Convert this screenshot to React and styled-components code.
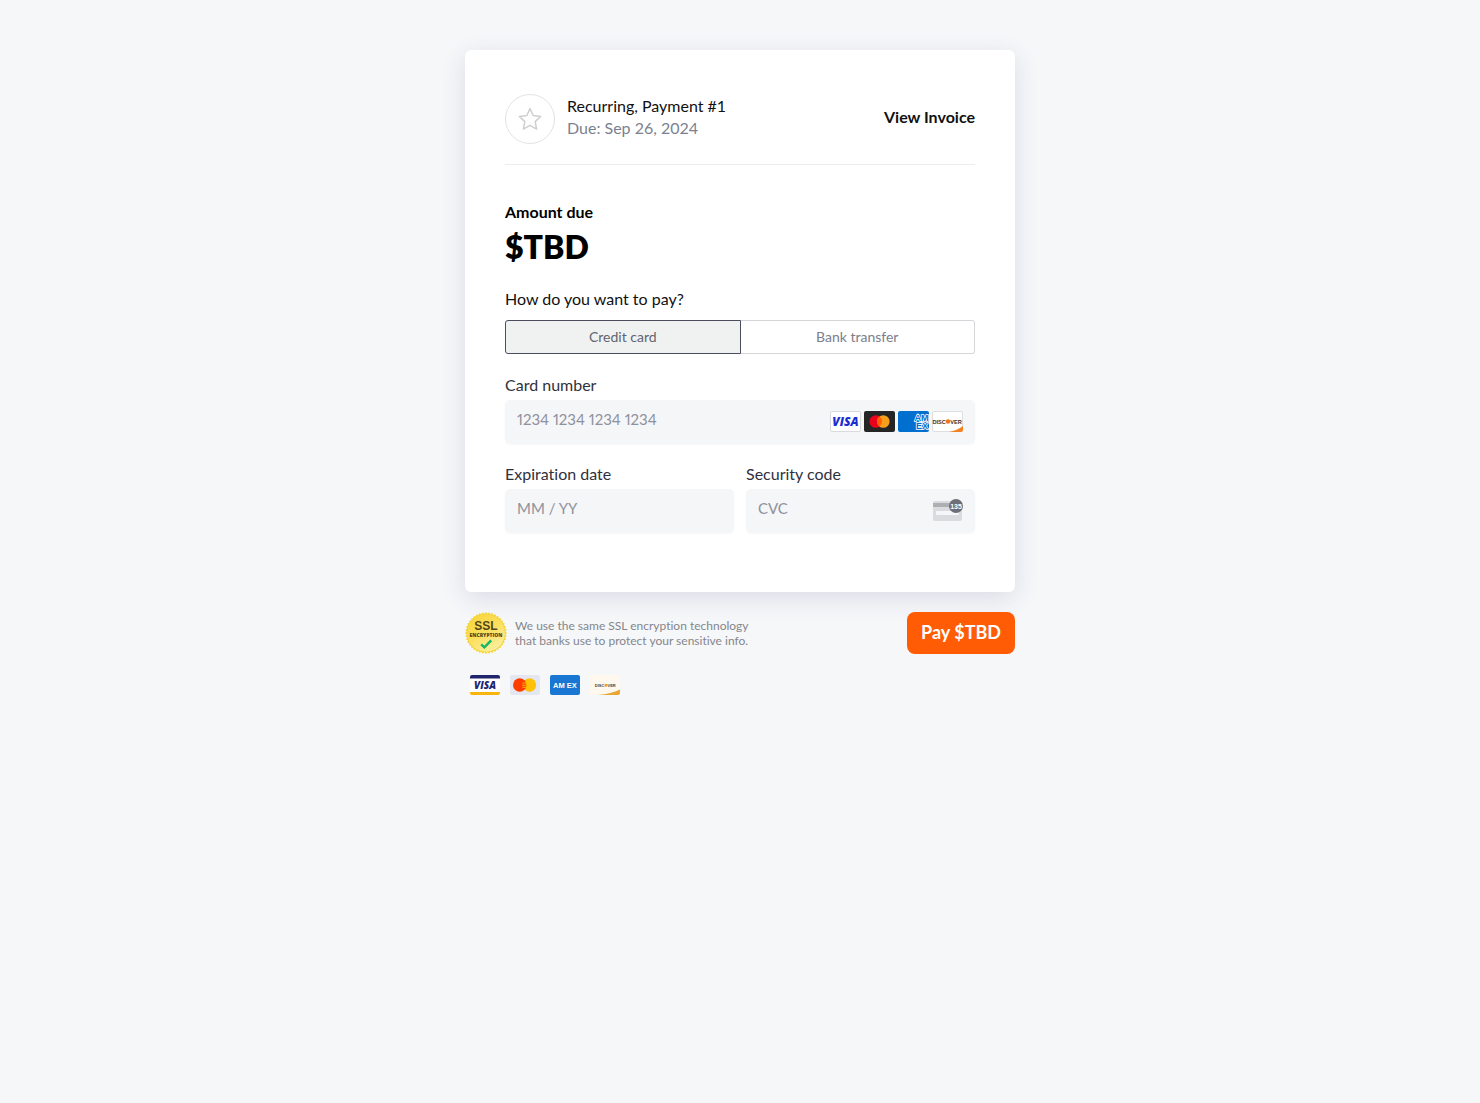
import React, { useState } from "react";
import styled, { createGlobalStyle } from "styled-components";

const App = () => {
  const [method, setMethod] = useState("card");

  return (
    <>
      <GlobalStyle />
      <Page>
        <Card>
          <Header>
            <Avatar>
              <StarIcon />
            </Avatar>
            <Heading>
              <Title>Recurring, Payment #1</Title>
              <DueDate>Due: Sep 26, 2024</DueDate>
            </Heading>
            <InvoiceLink href="#invoice">View Invoice</InvoiceLink>
          </Header>

          <AmountLabel>Amount due</AmountLabel>
          <Amount>$TBD</Amount>

          <Question id="method-label">How do you want to pay?</Question>
          <Toggle role="group" aria-labelledby="method-label">
            <ToggleButton
              type="button"
              $active={method === "card"}
              aria-pressed={method === "card"}
              onClick={() => setMethod("card")}
            >
              Credit card
            </ToggleButton>
            <ToggleButton
              type="button"
              $active={method === "bank"}
              aria-pressed={method === "bank"}
              onClick={() => setMethod("bank")}
            >
              Bank transfer
            </ToggleButton>
          </Toggle>

          <Fields>
            <Field $wide>
              <Label htmlFor="number">Card number</Label>
              <InputBox>
                <Input id="number" placeholder="1234 1234 1234 1234" />
                <Brands>
                  <VisaBadge />
                  <MastercardBadge />
                  <AmexBadge />
                  <DiscoverBadge />
                </Brands>
              </InputBox>
            </Field>
            <Field>
              <Label htmlFor="expiry">Expiration date</Label>
              <InputBox>
                <Input id="expiry" placeholder="MM / YY" />
              </InputBox>
            </Field>
            <Field>
              <Label htmlFor="cvc">Security code</Label>
              <InputBox>
                <Input id="cvc" placeholder="CVC" />
                <CvcIcon />
              </InputBox>
            </Field>
          </Fields>
        </Card>

        <Footer>
          <SslSeal />
          <SslText>
            We use the same SSL encryption technology
            <br />
            that banks use to protect your sensitive info.
          </SslText>
          <PayButton type="button">Pay $TBD</PayButton>
        </Footer>

        <Accepted>
          <VisaLogo />
          <MastercardLogo />
          <AmexLogo />
          <DiscoverLogo />
        </Accepted>
      </Page>
    </>
  );
};

export default App;

const StarIcon = () => (
  <svg width="24" height="24" viewBox="0 0 24 24" aria-hidden="true">
    <path
      d="M12 1.6l3.2 6.9 7.5.9-5.5 5.2 1.4 7.5-6.6-3.7-6.6 3.7 1.4-7.5L1.3 9.4l7.5-.9z"
      fill="none"
      stroke="#cfcfcf"
      strokeWidth="1.5"
      strokeLinejoin="round"
    />
  </svg>
);

const VisaBadge = () => (
  <svg width="31" height="21" viewBox="0 0 31 21" role="img" aria-label="Visa">
    <rect x=".5" y=".5" width="30" height="20" rx="1.5" fill="#fff" stroke="#d9d9de" />
    <LogoText x="15.5" y="15" fontSize="12" fill="#1a2ed0" $italic>
      VISA
    </LogoText>
  </svg>
);

const MastercardBadge = () => (
  <svg width="31" height="21" viewBox="0 0 31 21" role="img" aria-label="Mastercard">
    <rect width="31" height="21" rx="2" fill="#252525" />
    <circle cx="11.7" cy="10.5" r="6.3" fill="#eb001b" />
    <circle cx="19.3" cy="10.5" r="6.3" fill="#f79e1b" />
    <path d="M15.5 5.5a6.3 6.3 0 0 1 0 10 6.3 6.3 0 0 1 0-10z" fill="#ff5f00" />
  </svg>
);

const AmexBadge = () => (
  <svg width="31" height="21" viewBox="0 0 31 21" role="img" aria-label="American Express">
    <rect width="31" height="21" rx="2" fill="#016fd0" />
    <LogoText x="23.5" y="10" fontSize="9" fill="#016fd0" stroke="#fff" strokeWidth="1.5" $plain>
      AM
    </LogoText>
    <LogoText x="24" y="18" fontSize="9" fill="#016fd0" stroke="#fff" strokeWidth="1.5" $plain>
      EX
    </LogoText>
  </svg>
);

const DiscoverBadge = () => (
  <svg width="31" height="21" viewBox="0 0 31 21" role="img" aria-label="Discover">
    <rect x=".5" y=".5" width="30" height="20" rx="1.5" fill="#fff" stroke="#dededf" />
    <path d="M31 15v4a2 2 0 0 1-2 2H17c5.5-1 10-3 14-6z" fill="#f58220" />
    <LogoText x="7.2" y="12.6" fontSize="5.6" fill="#333" $plain>
      DISC
    </LogoText>
    <circle cx="16" cy="10.5" r="2.2" fill="#f47216" />
    <LogoText x="24" y="12.6" fontSize="5.6" fill="#333" $plain>
      VER
    </LogoText>
  </svg>
);

const CvcIcon = () => (
  <svg width="30" height="24" viewBox="0 0 30 24" aria-hidden="true">
    <rect y="3" width="29" height="20" rx="2" fill="#dadbde" />
    <rect y="5" width="29" height="4" fill="#aeafb4" />
    <rect x="3" y="13" width="23" height="4" rx="1" fill="#f5f6f8" />
    <circle cx="23" cy="8" r="7" fill="#6d6e78" />
    <LogoText x="23" y="10.7" fontSize="7" fill="#fff" $plain>
      135
    </LogoText>
  </svg>
);

// scalloped edge of the seal
const sealPoints = Array.from({ length: 80 }, (_, i) => {
  const radius = i % 2 ? 19.4 : 21;
  const angle = (i * Math.PI) / 40;
  return `${21 + radius * Math.cos(angle)},${21 + radius * Math.sin(angle)}`;
}).join(" ");

const SslSeal = () => (
  <svg width="42" height="42" viewBox="0 0 42 42" role="img" aria-label="SSL encryption">
    <defs>
      <linearGradient id="seal" x1="0" y1="0" x2="0.6" y2="1">
        <stop offset="0" stopColor="#f7d437" />
        <stop offset="0.55" stopColor="#fbdf5c" />
        <stop offset="1" stopColor="#fbee9c" />
      </linearGradient>
    </defs>
    <polygon points={sealPoints} fill="#f5d33a" />
    <circle cx="21" cy="21" r="18.8" fill="url(#seal)" />
    <LogoText x="21" y="17.5" fontSize="12" fill="#54481a" $plain>
      SSL
    </LogoText>
    <LogoText x="21" y="25" fontSize="5" fill="#54481a">
      ENCRYPTION
    </LogoText>
    <path d="M16.2 32.3l3.2 3 6.8-7" fill="none" stroke="#12b76a" strokeWidth="2.4" />
  </svg>
);

const VisaLogo = () => (
  <svg width="30" height="20" viewBox="0 0 30 20" role="img" aria-label="Visa">
    <rect width="30" height="20" rx="2" fill="#fff" />
    <path d="M0 3.4V2a2 2 0 0 1 2-2h26a2 2 0 0 1 2 2v1.4z" fill="#20246c" />
    <path d="M0 17h30v1a2 2 0 0 1-2 2H2a2 2 0 0 1-2-2z" fill="#f9b50b" />
    <LogoText x="15" y="14" fontSize="10" fill="#20246c" $italic>
      VISA
    </LogoText>
  </svg>
);

const MastercardLogo = () => (
  <svg width="30" height="20" viewBox="0 0 30 20" role="img" aria-label="Mastercard">
    <rect width="30" height="20" rx="2" fill="#e4e6f1" />
    <circle cx="19.5" cy="10" r="6.7" fill="#ffc107" />
    <circle cx="9.7" cy="10" r="6.7" fill="#ff3d00" />
    <path d="M12.5 8h4M12 10.2h4.5M12.5 12.3h4" stroke="#ffb300" />
  </svg>
);

const AmexLogo = () => (
  <svg width="30" height="20" viewBox="0 0 30 20" role="img" aria-label="American Express">
    <rect width="30" height="20" rx="2" fill="#1976d2" />
    <LogoText x="15" y="12.5" fontSize="7.5" fill="#fff" $plain>
      AM EX
    </LogoText>
  </svg>
);

const DiscoverLogo = () => (
  <svg width="30" height="20" viewBox="0 0 30 20" role="img" aria-label="Discover">
    <rect width="30" height="20" rx="2" fill="#fff8ee" />
    <path d="M30 14.5V18a2 2 0 0 1-2 2H8c9-.8 16-2.7 22-5.5z" fill="#e8a632" />
    <LogoText x="9.6" y="11.7" fontSize="4" fill="#444" $plain>
      DISC
    </LogoText>
    <circle cx="16" cy="10.3" r="1.5" fill="#f0a020" />
    <LogoText x="21.6" y="11.7" fontSize="4" fill="#444" $plain>
      VER
    </LogoText>
  </svg>
);

const GlobalStyle = createGlobalStyle`
  * {
    box-sizing: border-box;
  }
  body {
    margin: 0;
    background: #f5f7f9;
    color: #111;
    font-family: Lato, "Liberation Sans", sans-serif;
    font-size: 16px;
    font-variant-ligatures: none;
    line-height: 22px;
  }
  p, h1 {
    margin: 0;
  }
`;

const LogoText = styled.text`
  font-family: ${({ $plain }) => ($plain ? '"Liberation Sans"' : '"Open Sans"')}, sans-serif;
  font-weight: 800;
  font-style: ${({ $italic }) => ($italic ? "italic" : "normal")};
  text-anchor: middle;
  paint-order: stroke;
`;

const Page = styled.main`
  max-width: 550px;
  margin: 0 auto;
  padding: 50px 0;
`;

const Card = styled.section`
  padding: 44px 40px 59px;
  border-radius: 6px;
  background: #fff;
  box-shadow: 0 6px 24px rgba(60, 66, 110, 0.14);
`;

const Header = styled.header`
  display: flex;
  align-items: center;
  gap: 12px;
  padding-bottom: 20px;
  border-bottom: 1px solid #ececec;
`;

const Avatar = styled.div`
  display: flex;
  align-items: center;
  justify-content: center;
  width: 50px;
  height: 50px;
  border: 1px solid #e3e3e3;
  border-radius: 50%;
`;

const Heading = styled.div`
  flex: 1;
  padding-bottom: 4px;
`;

const Title = styled.h1`
  font-size: 16px;
  font-weight: 400;
`;

const DueDate = styled.p`
  color: #7b8190;
`;

const InvoiceLink = styled.a`
  padding-bottom: 4px;
  color: #111;
  font-weight: 700;
  text-decoration: none;
`;

const AmountLabel = styled.p`
  margin-top: 36px;
  color: #000;
  font-weight: 700;
`;

const Amount = styled.p`
  color: #000;
  font-size: 32px;
  font-weight: 800;
  line-height: 48px;
`;

const Question = styled.p`
  margin: 17px 0 10px;
`;

const Toggle = styled.div`
  display: flex;
`;

const ToggleButton = styled.button`
  flex: 1;
  height: 34px;
  padding: 0 0 2px;
  border: 1px solid ${({ $active }) => ($active ? "#4b4d5c" : "#d5d6da")};
  background: ${({ $active }) => ($active ? "#f0f2f2" : "#fff")};
  color: ${({ $active }) => ($active ? "#62646f" : "#7b7e8b")};
  font-family: inherit;
  font-size: 14px;
  cursor: pointer;
  &:first-child {
    border-radius: 3px 0 0 3px;
  }
  &:last-child {
    border-left-width: 0;
    border-radius: 0 3px 3px 0;
  }
`;

const Fields = styled.div`
  display: grid;
  grid-template-columns: repeat(2, minmax(0, 1fr));
  gap: 19px 12px;
  margin-top: 20px;
`;

const Field = styled.div`
  grid-column: ${({ $wide }) => ($wide ? "1 / -1" : "auto")};
`;

const Label = styled.label`
  display: block;
  padding-bottom: 4px;
  color: #30313d;
`;

const InputBox = styled.div`
  display: flex;
  align-items: center;
  height: 44px;
  padding: 0 12px 2px;
  border-radius: 5px;
  background: #f5f6f8;
  box-shadow: 0 1px 2px rgba(0, 0, 0, 0.03);
`;

const Input = styled.input`
  flex: 1;
  min-width: 0;
  padding: 0 0 4px;
  border: 0;
  outline: 0;
  background: none;
  color: #30313d;
  font-family: inherit;
  font-size: 15px;
  font-variant-numeric: proportional-nums;
  &::placeholder {
    color: #8f919d;
    opacity: 1;
  }
`;

const Brands = styled.div`
  display: flex;
  gap: 3px;
`;

const Footer = styled.footer`
  display: flex;
  align-items: center;
  gap: 8px;
  margin-top: 20px;
`;

const SslText = styled.p`
  flex: 1;
  color: #85868c;
  font-size: 12px;
  line-height: 15px;
`;

const PayButton = styled.button`
  height: 42px;
  padding: 0 14px 2px;
  border: 0;
  border-radius: 8px;
  background: #ff5c05;
  color: #fff;
  font-family: inherit;
  font-size: 18px;
  font-weight: 700;
  cursor: pointer;
`;

const Accepted = styled.div`
  display: flex;
  gap: 10px;
  padding: 21px 5px;
`;
